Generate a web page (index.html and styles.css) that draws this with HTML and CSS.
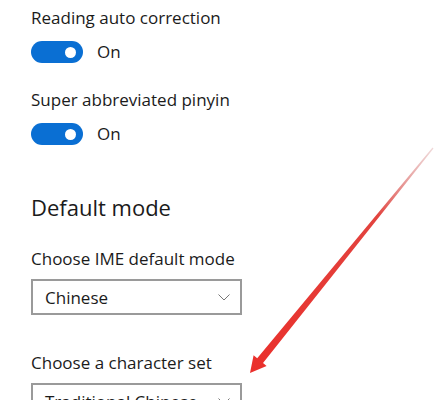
FILE: index.html
```html
<!DOCTYPE html>
<html lang="en">
<head>
    <meta charset="UTF-8">
    <meta name="viewport" content="width=device-width, initial-scale=1.0">
    <title>IME settings</title>
    <link rel="stylesheet" href="styles.css">
</head>
<body>
    <div class="page">
        <!-- fuzzy options -->
        <div class="setting">
            <p class="label">Reading auto correction</p>
            <div class="toggle-row">
                <span class="toggle"><span class="knob"></span></span>
                <span class="state">On</span>
            </div>
        </div>

        <div class="setting setting-second">
            <p class="label">Super abbreviated pinyin</p>
            <div class="toggle-row">
                <span class="toggle"><span class="knob"></span></span>
                <span class="state">On</span>
            </div>
        </div>

        <!-- default mode -->
        <h2 class="section-title">Default mode</h2>

        <div class="setting">
            <p class="label">Choose IME default mode</p>
            <div class="select">
                <span class="select-value">Chinese</span>
                <svg class="chevron" width="12" height="7" viewBox="0 0 12 7"><path d="M0.5 0.5 L6 6 L11.5 0.5" fill="none" stroke="#777" stroke-width="1"/></svg>
            </div>
        </div>

        <div class="setting setting-charset">
            <p class="label">Choose a character set</p>
            <div class="select select-charset">
                <span class="select-value">Traditional Chinese</span>
                <svg class="chevron" width="12" height="7" viewBox="0 0 12 7"><path d="M0.5 0.5 L6 6 L11.5 0.5" fill="none" stroke="#777" stroke-width="1"/></svg>
            </div>
        </div>

        <!-- red annotation arrow -->
        <svg class="arrow" width="442" height="400" viewBox="0 0 442 400">
            <defs>
                <linearGradient id="fade" x1="433" y1="148" x2="250" y2="373" gradientUnits="userSpaceOnUse">
                    <stop offset="0" stop-color="#d9a0a0" stop-opacity="0.4"/>
                    <stop offset="0.3" stop-color="#e2443f"/>
                    <stop offset="1" stop-color="#ea2f2b"/>
                </linearGradient>
            </defs>
            <polygon fill="url(#fade)" points="250,373 253.6,355.2 257.2,358.2 432.5,147.6 433.5,148.4 263,363 266.6,366"/>
        </svg>
    </div>
</body>
</html>
```

FILE: styles.css
```css
/* 全局 */
body {
    margin: 0;
    font-family: "Open Sans", "Noto Sans", Arial, sans-serif;
    background-color: #ffffff;
    color: #1b1b1b;
    overflow: hidden;
}

.page {
    position: relative;
    height: 400px;
    padding-left: 31px;
}

/* 标签 */
.label {
    margin: 0;
    padding-top: 6px;
    font-size: 17px;
    line-height: 24px;
}

.setting-second .label {
    padding-top: 25px;
}

/* 开关 */
.toggle-row {
    display: flex;
    align-items: center;
    margin-top: 11px;
}

.toggle {
    width: 52px;
    height: 22px;
    border-radius: 11px;
    background-color: #0a6fd3;
    display: flex;
    align-items: center;
    justify-content: flex-end;
    padding-right: 7px;
    box-sizing: border-box;
}

.knob {
    width: 11px;
    height: 11px;
    border-radius: 50%;
    background-color: #ffffff;
}

.state {
    margin-left: 14px;
    font-size: 17px;
    line-height: 22px;
}

/* 小标题 */
.section-title {
    margin: 47px 0 0;
    font-size: 22px;
    font-weight: 400;
    line-height: 30px;
}

.section-title + .setting .label {
    padding-top: 25px;
}

/* 下拉框 */
.select {
    width: 211px;
    height: 36px;
    margin-top: 8px;
    border: 2px solid #9a9a9a;
    box-sizing: border-box;
    display: flex;
    align-items: center;
    justify-content: space-between;
    padding: 0 10px 0 12px;
}

.select-value {
    font-size: 17px;
}

.setting-charset .label {
    padding-top: 36px;
}

.select-charset {
    margin-top: 8px;
}

/* 箭头 */
.arrow {
    position: absolute;
    top: 0;
    left: 0;
    pointer-events: none;
}
```
